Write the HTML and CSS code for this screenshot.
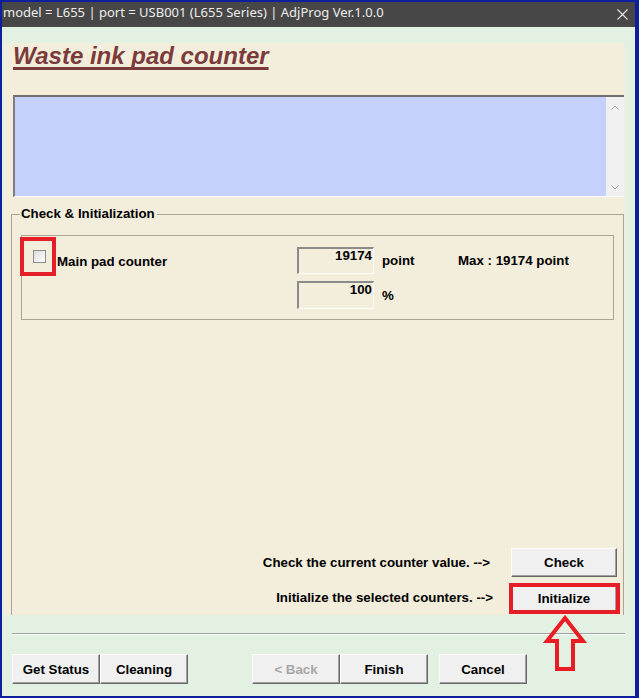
FILE: index.html
```html
<!DOCTYPE html>
<html>
<head>
<meta charset="utf-8">
<link rel="stylesheet" href="styles.css">
</head>
<body>
<div class="window">
  <div class="titlebar">
    <span class="title-text">model = L655 | port = USB001 (L655 Series) | AdjProg Ver.1.0.0</span>
    <svg class="close" width="11" height="11" viewBox="0 0 11 11"><path d="M0.5 0.5 L10.5 10.5 M10.5 0.5 L0.5 10.5" stroke="#e6e6e6" stroke-width="1.1" fill="none"/></svg>
  </div>
  <div class="client">
    <div class="panel">
      <h1 class="heading">Waste ink pad counter</h1>
      <div class="log">
        <div class="log-area"></div>
        <div class="scrollbar">
          <svg width="8" height="5" viewBox="0 0 8 5"><path d="M0.5 4.5 L4 1 L7.5 4.5" stroke="#a8a8a8" stroke-width="1" fill="none"/></svg>
          <svg width="8" height="5" viewBox="0 0 8 5"><path d="M0.5 0.5 L4 4 L7.5 0.5" stroke="#a8a8a8" stroke-width="1" fill="none"/></svg>
        </div>
      </div>
      <fieldset class="group">
        <legend class="group-title">Check &amp; Initialization</legend>
        <div class="counter-box">
          <div class="counter-row">
            <div class="chk-wrap"><span class="chk"></span><span class="mark mark-chk"></span></div>
            <span class="counter-label">Main pad counter</span>
            <span class="field">19174</span>
            <span class="unit">point</span>
            <span class="max">Max : 19174 point</span>
          </div>
          <div class="counter-row row2">
            <span class="field field-tall">100</span>
            <span class="unit unit-pct">%</span>
          </div>
        </div>
        <div class="action-row first">
          <span class="action-text text-check">Check the current counter value. --&gt;</span>
          <span class="btn-wrap"><button class="btn btn-action">Check</button></span>
        </div>
        <div class="action-row second">
          <span class="action-text text-init">Initialize the selected counters. --&gt;</span>
          <span class="btn-wrap"><button class="btn btn-action">Initialize</button><span class="mark mark-init"></span></span>
        </div>
      </fieldset>
    </div>
    <div class="separator"></div>
    <div class="button-bar">
      <button class="btn">Get Status</button>
      <button class="btn">Cleaning</button>
      <button class="btn btn-disabled back">&lt; Back</button>
      <button class="btn">Finish</button>
      <button class="btn cancel">Cancel</button>
    </div>
  </div>
</div>
<svg class="arrow" width="50" height="66" viewBox="0 0 50 66"><path d="M25 8 L43 31 L33 31 L33 59 L17 59 L17 31 L7 31 Z" stroke="#ea1c24" stroke-width="4" fill="none" stroke-linejoin="miter"/></svg>
</body>
</html>
```

FILE: styles.css
```css
html, body {
  margin: 0;
  padding: 0;
}
body {
  background: #0d1f9c;
  width: 639px;
  height: 698px;
  overflow: hidden;
  font-family: "Liberation Sans", Arial, sans-serif;
}
.window {
  margin: 2px 4px 2px 2px;
  height: 694px;
  display: flex;
  flex-direction: column;
}
.titlebar {
  height: 25px;
  flex: none;
  background: #474747;
  color: #ececec;
  display: flex;
  justify-content: space-between;
  align-items: flex-start;
}
.title-text {
  font-family: "Noto Sans", sans-serif;
  font-size: 13px;
  line-height: 21px;
  padding-left: 1px;
  white-space: nowrap;
}
.close {
  margin-top: 7px;
  margin-right: 7px;
}
.client {
  flex: 1;
  background: #e3f1e3;
  padding: 16px 10px 0 2px;
}
.panel {
  height: 572px;
  box-sizing: border-box;
  background: #f3eddb;
  padding: 0 1px 0 9px;
  display: flex;
  flex-direction: column;
}
.heading {
  margin: 0;
  font-size: 24px;
  line-height: 26px;
  height: 26px;
  font-weight: bold;
  font-style: italic;
  color: #7b3b3b;
  text-decoration: underline;
  text-decoration-thickness: 3px;
  text-underline-offset: 3px;
  text-decoration-skip-ink: none;
  white-space: nowrap;
}
.log {
  margin-top: 26px;
  height: 102px;
  box-sizing: border-box;
  display: flex;
  border-top: 2px solid #6e6e6e;
  border-left: 2px solid #7c7c7c;
  border-bottom: 1px solid #ffffff;
  flex: none;
}
.log-area {
  flex: 1;
  background: #c6d0fd;
}
.scrollbar {
  width: 18px;
  background: #f0f0f0;
  display: flex;
  flex-direction: column;
  justify-content: space-between;
  align-items: center;
  padding: 8px 0 6px;
  box-sizing: border-box;
}
.group {
  margin: 9px 0 0 -2px;
  padding: 0 9px 3px 9px;
  border: 1px solid #a8a596;
  border-bottom: none;
  min-width: 0;
  flex: none;
}
.group-title {
  padding: 0 2px 0 1px;
  margin-left: -1px;
  font-size: 13.3px;
  line-height: 16px;
  font-weight: bold;
  color: #000;
}
.counter-box {
  margin-top: 13px;
  height: 85px;
  box-sizing: border-box;
  border: 1px solid #a8a596;
  padding: 11px 0 0 11px;
  font-size: 13.3px;
  font-weight: bold;
  color: #000;
}
.counter-row {
  display: flex;
  align-items: flex-start;
  height: 27px;
}
.row2 {
  margin-top: 7px;
  height: 28px;
  padding-left: 264px;
}
.chk-wrap {
  position: relative;
  width: 24px;
  height: 27px;
  flex: none;
}
.chk {
  display: block;
  margin-top: 3px;
  width: 13px;
  height: 13px;
  box-sizing: border-box;
  border: 1px solid #8c8c8c;
  background: linear-gradient(135deg, #dcdcdc, #ffffff);
}
.mark {
  position: absolute;
  box-sizing: border-box;
  border: 4px solid #e41f28;
}
.mark-chk {
  left: -13px;
  top: -10px;
  width: 36px;
  height: 39px;
}
.counter-label {
  width: 240px;
  padding-top: 7px;
  line-height: 16px;
  flex: none;
}
.field {
  width: 77px;
  height: 27px;
  box-sizing: border-box;
  border-top: 2px solid #8a8a8a;
  border-left: 2px solid #8a8a8a;
  border-right: 1px solid #ffffff;
  border-bottom: 1px solid #ffffff;
  text-align: right;
  padding-right: 1px;
  line-height: 14px;
  flex: none;
}
.field-tall {
  height: 28px;
}
.unit {
  margin-left: 8px;
  width: 76px;
  padding-top: 6px;
  line-height: 16px;
  flex: none;
}
.unit-pct {
  padding-top: 7px;
}
.max {
  padding-top: 6px;
  line-height: 16px;
  white-space: nowrap;
}
.action-row {
  display: flex;
  justify-content: flex-end;
  align-items: center;
  margin-right: -3px;
  font-size: 13.3px;
  font-weight: bold;
  color: #000;
}
.action-row.first {
  margin-top: 228px;
  height: 29px;
}
.action-row.second {
  margin-top: 7px;
  height: 28px;
}
.action-text {
  line-height: 16px;
  white-space: nowrap;
}
.text-check {
  margin-right: 21px;
}
.text-init {
  margin-right: 18px;
}
.btn-wrap {
  position: relative;
  height: 100%;
  display: flex;
}
.btn {
  width: 88px;
  height: 30px;
  box-sizing: border-box;
  background: #f0f0f0;
  border: 1px solid;
  border-color: #ffffff #696969 #696969 #ffffff;
  box-shadow: inset -1px -1px 0 #a0a0a0;
  font-family: "Liberation Sans", Arial, sans-serif;
  font-size: 13.3px;
  font-weight: bold;
  color: #000;
  padding: 0;
  margin: 0;
}
.btn-action {
  width: 106px;
  height: 100%;
}
.mark-init {
  left: -2px;
  top: -1px;
  width: 111px;
  height: 31px;
}
.btn-disabled {
  color: #a6a6a6;
}
.separator {
  margin: 18px 0 0 8px;
  height: 1px;
  background: #a3a3a3;
  border-bottom: 1px solid #f8fff8;
}
.button-bar {
  margin-top: 19px;
  padding-left: 8px;
  display: flex;
  height: 30px;
}
.back {
  margin-left: 64px;
}
.cancel {
  margin-left: 11px;
}
.arrow {
  position: absolute;
  left: 540px;
  top: 610px;
}
```
